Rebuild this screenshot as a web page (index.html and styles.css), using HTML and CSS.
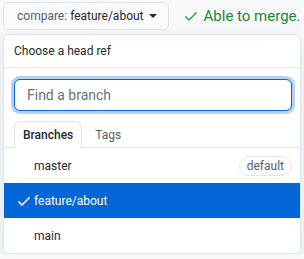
FILE: index.html
```html
<!DOCTYPE html>
<html lang="en">
	<head>
		<meta charset="utf-8">
		<title>Compare branches</title>
		<link rel="stylesheet" href="styles.css">
	</head>
	<body>
		<div class="topbar">
			<button class="compare">
				<span class="muted">compare:</span> feature/about
				<span class="caret"></span>
			</button>
			<div class="status">
				<svg class="ok" width="16" height="16" viewBox="0 0 16 16"><path d="M13.78 4.22a.75.75 0 0 1 0 1.06l-7.25 7.25a.75.75 0 0 1-1.06 0L2.22 9.28a.75.75 0 0 1 1.06-1.06L6 10.94l6.72-6.72a.75.75 0 0 1 1.06 0z"/></svg>
				<span class="merge">Able to merge.</span>
				<span class="rest">These branches can be automatically merged.</span>
			</div>
		</div>
		<div class="menu">
			<div class="menu-header">Choose a head ref</div>
			<div class="filter">
				<input type="text" placeholder="Find a branch">
			</div>
			<div class="tabs">
				<span class="tab selected">Branches</span>
				<span class="tab">Tags</span>
			</div>
			<div class="list">
				<div class="item">
					<span class="name">master</span>
					<span class="label">default</span>
				</div>
				<div class="item active">
					<svg class="check" width="16" height="16" viewBox="0 0 16 16"><path d="M13.78 4.22a.75.75 0 0 1 0 1.06l-7.25 7.25a.75.75 0 0 1-1.06 0L2.22 9.28a.75.75 0 0 1 1.06-1.06L6 10.94l6.72-6.72a.75.75 0 0 1 1.06 0z"/></svg>
					<span class="name">feature/about</span>
				</div>
				<div class="item">
					<span class="name">main</span>
				</div>
			</div>
		</div>
	</body>
</html>
```
FILE: styles.css
```css
body {
	margin: 0;
	background: #f6f8fa;
	font-family: Roboto, sans-serif;
	color: #24292e;
	overflow: hidden;
}

.topbar {
	display: flex;
	align-items: center;
	padding: 2px 0 0 3px;
	white-space: nowrap;
	overflow: hidden;
}

.compare {
	display: flex;
	align-items: center;
	height: 28px;
	padding: 0 11px 0 13px;
	font-family: inherit;
	font-size: 12px;
	color: #24292e;
	background: #fafbfc;
	border: 1px solid #e1e4e8;
	border-radius: 6px;
}

.compare .muted {
	color: #586069;
	margin-right: 3px;
}

.caret {
	margin-left: 5px;
	border-top: 4px solid #24292e;
	border-left: 4px solid transparent;
	border-right: 4px solid transparent;
}

.status {
	display: flex;
	align-items: center;
	margin-left: 14px;
	font-size: 15px;
	color: #24292e;
}

.status .merge {
	color: #22863a;
	margin-right: 6px;
}

.ok {
	fill: #28a745;
	margin-right: 5px;
}

.menu {
	margin: 4px 3px 0 3px;
	width: 296px;
	background: #fff;
	border: 1px solid #e1e4e8;
	border-radius: 6px;
	box-shadow: 0 8px 24px rgba(149, 157, 165, 0.2);
}

.menu-header {
	padding: 8px 10px;
	height: 16px;
	font-size: 12px;
	line-height: 16px;
	border-bottom: 1px solid #eaecef;
}

.filter {
	padding: 11px 8px 10px 10px;
}

.filter input {
	display: block;
	box-sizing: border-box;
	width: 100%;
	height: 32px;
	padding: 0 12px;
	font-family: inherit;
	font-size: 14px;
	border: 1px solid #0366d6;
	border-radius: 6px;
	outline: none;
	box-shadow: 0 0 0 3px rgba(3, 102, 214, 0.3);
}

.filter input::placeholder {
	color: #6a737d;
}

.tabs {
	display: flex;
	padding: 0 10px;
	border-bottom: 1px solid #e1e4e8;
}

.tab {
	padding: 0 12px;
	height: 25px;
	line-height: 27px;
	font-size: 12px;
	color: #586069;
	border: 1px solid transparent;
	border-bottom: 0;
	border-radius: 6px 6px 0 0;
	margin-bottom: -1px;
}

.tab.selected {
	color: #24292e;
	background: #fff;
	border-color: #e1e4e8;
	padding: 0 8px;
	height: 26px;
	font-weight: 500;
}

.item {
	display: flex;
	align-items: center;
	height: 35px;
	padding: 0 8px 0 30px;
	font-size: 12px;
	color: #24292e;
}

.item .name {
	flex: 1;
}

.item.active {
	padding-left: 12px;
	background: #0366d6;
	color: #fff;
}

.check {
	fill: #fff;
	margin-right: 2px;
}

.label {
	padding: 0 7px;
	height: 18px;
	line-height: 18px;
	font-size: 12px;
	color: #586069;
	border: 1px solid #e1e4e8;
	border-radius: 10px;
}
```
